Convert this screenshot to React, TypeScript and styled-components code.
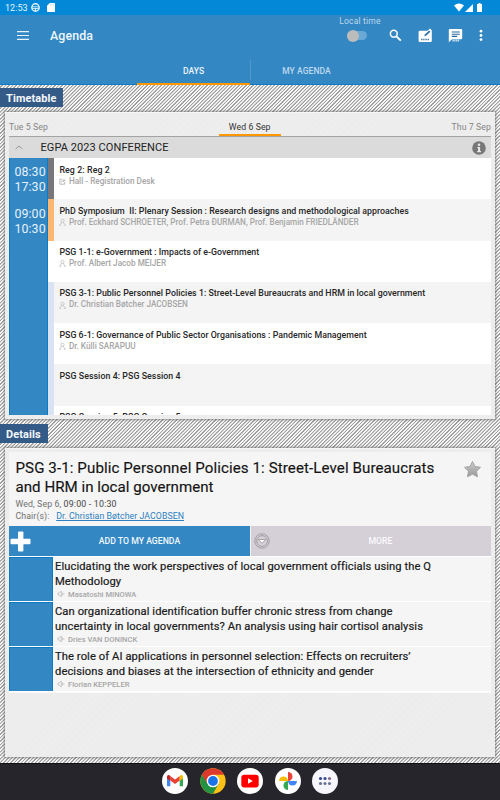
import React from "react";
import styled, { createGlobalStyle } from "styled-components";

const Global = createGlobalStyle`
  * { box-sizing: border-box; }
  body { margin: 0; font-family: Roboto, "Liberation Sans", sans-serif; background: #25252b; }
  svg { display: block; flex: none; }
`;

const Screen = styled.div`
  width: 500px; height: 800px; display: flex; flex-direction: column; overflow: hidden;
`;
const StatusBar = styled.div`
  height: 15px; background: #0288d6; color: #e3f3fc; display: flex; align-items: center;
  padding: 0 17px 0 5px; font-size: 9px; letter-spacing: 0.05px;
`;
const Clock = styled.span`width: 26px;`;
const StatusIcons = styled.div`display: flex; gap: 7px; align-items: center;`;
const SignalIcons = styled.div`display: flex; gap: 1px; align-items: center; margin-left: auto;`;

const AppBar = styled.header`
  height: 70px; background: #3387c3; border-bottom: 1px solid #0b7bc4; display: flex; flex-direction: column;
`;
const Toolbar = styled.div`height: 41px; display: flex; align-items: center; padding: 0 17px 0 17px;`;
const Title = styled.h1`
  margin: 0 0 0 21px; font-size: 12.4px; line-height: 14px; font-weight: 500; color: #eef6fb; letter-spacing: 0.1px; flex: 1;
`;
const LocalTime = styled.div`
  display: flex; flex-direction: column; align-items: center; width: 42px; height: 41px; padding-top: 1px;
  font-size: 8.5px; line-height: 11px; color: #bcd8ec; letter-spacing: 0.2px; white-space: nowrap;
`;
const Track = styled.div`
  width: 20px; height: 9px; border-radius: 5px; background: #6aa8d5; margin: 4px 0 0 -6px; display: flex; align-items: center;
`;
const Knob = styled.div`width: 12px; height: 12px; border-radius: 50%; background: #bcbcbc; flex: none;`;
const Actions = styled.div`display: flex; align-items: center; margin-left: 8px; height: 40px;`;

const Tabs = styled.nav`height: 29px; display: flex; padding-left: 137px;`;
const Tab = styled.div<{ $active?: boolean }>`
  width: ${(p) => (p.$active ? 113 : 111)}px; height: 29px; padding-top: 10px; text-align: center; line-height: 10px;
  font-size: 8.5px; font-weight: 500; letter-spacing: 0.08px; color: ${(p) => (p.$active ? "#eef6fb" : "#bdd9ed")};
  border-bottom: ${(p) => (p.$active ? "2px solid #ff9800" : "none")};
`;
const TabDivider = styled.div`width: 1px; height: 20px; background: #5197cb; margin-top: 4px;`;

const Hatched = styled.main`
  height: 678px; padding-top: 3px;
  background: repeating-linear-gradient(135deg, #f7f7f7 0 1.05px, #a0a0a0 1.4px 2.15px, #f7f7f7 2.5px);
`;
const SectionLabel = styled.h2<{ $w: number }>`
  margin: 0; width: ${(p) => p.$w}px; height: 19px; padding-left: 6px; line-height: 21px;
  background: #345a87; color: #f6f8fb; font-size: 10.9px; font-weight: 700; letter-spacing: 0.14px;
`;
const Panel = styled.section<{ $h: number; $tail: number }>`
  margin: 5px 5px ${(p) => p.$tail}px; height: ${(p) => p.$h}px; padding: 3px 4px 4px;
  background: repeating-linear-gradient(135deg, #efefef 0 1.25px, #ebebeb 1.25px 2.5px);
  border-top: 1px solid #f6f6f6; box-shadow: 0 0 2px 1px rgba(90, 90, 90, 0.55);
`;

const DayBar = styled.div`
  height: 21px; display: flex; justify-content: space-between; border-bottom: 1px solid #a3a3a3;
`;
const Day = styled.div<{ $active?: boolean }>`
  height: ${(p) => (p.$active ? 20 : 19)}px; font-size: 8.7px; line-height: 22.5px; letter-spacing: 0.1px;
  color: ${(p) => (p.$active ? "#333" : "#858585")}; text-align: center;
  ${(p) => p.$active && "width: 62px; border-bottom: 2px solid #ff9800;"}
`;
const GroupHeader = styled.div`
  height: 21px; background: #dbdbdb; display: flex; align-items: center; padding: 0 5px 0 6px;
`;
const GroupTitle = styled.div`flex: 1; margin-left: 17.5px; font-size: 11px; color: #222; letter-spacing: 0.08px;`;
const Schedule = styled.div`height: 257px; display: flex; overflow: hidden;`;
const Times = styled.div`width: 39px; background: #3387c3; border-right: 1px solid #0b7bc4; border-left: 1px solid #0b7bc4;`;
const Time = styled.div`
  height: 41.3px; padding: 6.4px 0 0 4.4px; color: #e6f1f9; font-size: 12.4px; line-height: 15px; letter-spacing: 0.1px;
`;
const Sessions = styled.div`flex: 1;`;
const Session = styled.div<{ $stripe: string; $alt: boolean }>`
  height: 41.3px; border-left: 6px solid ${(p) => p.$stripe}; background: ${(p) => (p.$alt ? "#f4f4f4" : "#fff")};
  padding: 6.6px 0 0 5.4px;
`;
const SessionTitle = styled.div<{ $ls: number }>`
  font-size: 8.8px; line-height: 11px; font-weight: 500; color: #262626; white-space: pre; letter-spacing: ${(p) => p.$ls}px;
`;
const Meta = styled.div<{ $ls: number }>`
  display: flex; align-items: center; gap: 1.5px; font-size: 8.2px; line-height: 11.5px; font-weight: 500; color: #a6a6a6; white-space: nowrap;
  letter-spacing: ${(p) => p.$ls}px;
`;

const DetailBody = styled.div`background: #f5f5f5; border-bottom: 1px solid #fafafa;`;
const DetailHead = styled.div`height: 74px; padding: 7px 9px 0 6.5px; display: flex; justify-content: space-between;`;
const DetailTitle = styled.div`font-size: 15.1px; line-height: 19.4px; color: #141414; white-space: nowrap; -webkit-text-stroke: 0.15px #141414;`;
const TitleLine = styled.div<{ $ls: number }>`letter-spacing: ${(p) => p.$ls}px;`;
const Info = styled.div`font-size: 8.8px; line-height: 12px; color: #707070; letter-spacing: 0.08px; white-space: pre;`;
const Strong = styled.span`color: #444; letter-spacing: 0.2px;`;
const PersonLink = styled.a`color: #2c7fc0; text-decoration: underline; margin-left: 4.5px; letter-spacing: 0.04px;`;
const Buttons = styled.div`display: grid; grid-template-columns: 241px 240px; gap: 1px; height: 31px; border-bottom: 1px solid #fff;`;
const Button = styled.div<{ $bg: string; $fg: string; $pad: number }>`
  height: 30px; background: ${(p) => p.$bg}; color: ${(p) => p.$fg}; display: flex; align-items: center;
  padding-left: ${(p) => p.$pad}px; font-size: 8.7px; font-weight: 500;
`;
const ButtonLabel = styled.span<{ $shift: number }>`flex: 1; text-align: center; margin-left: ${(p) => p.$shift}px;`;
const Paper = styled.article`height: 45px; display: flex; border-bottom: 1px solid #fff;`;
const Thumb = styled.div`width: 44px; background: #3387c3; border: 1px solid #0b7bc4; border-width: 1px 1px 0;`;
const PaperText = styled.div`padding: 2px 0 0 2px; font-size: 11.2px; line-height: 15px; color: #1a1a1a; white-space: nowrap;`;
const PaperLine = styled.div<{ $ls: number }>`letter-spacing: ${(p) => p.$ls}px; -webkit-text-stroke: 0.2px #1a1a1a;`;
const Speaker = styled.div`
  display: flex; align-items: center; gap: 3px; padding-left: 2px; margin-top: -0.5px;
  font-size: 7.6px; line-height: 11px; color: #a6a6a6; font-weight: 500;
`;
const Dock = styled.footer`
  height: 37px; background: #25252b; border-top: 1px solid #111; display: flex; justify-content: center; gap: 11.5px; padding-top: 4px;
`;

const Person = () => (
  <svg width="8" height="9" viewBox="0 0 8 9" fill="none" stroke="#b9b9b9" strokeWidth=".7">
    <circle cx="3.5" cy="2.8" r="1.6" /><path d="M.6 7.4Q1 5.4 2.7 5.1V4.2M6.4 7.4Q6 5.4 4.3 5.1V4.2M.6 7.3h1.6M4.8 7.3h1.6" />
  </svg>
);
const Place = () => (
  <svg width="8" height="9" viewBox="0 0 8 9" fill="none" stroke="#aaa" strokeWidth=".8">
    <path d="M3 2.3H.9v4.9h4.8V5M2.4 5.3Q2.6 3.4 5.6 3.3M4.3 1.7l1.6 1.6-1.6 1.6" />
  </svg>
);
const Horn = () => (
  <svg width="8" height="8" viewBox="0 0 8 8" fill="none" stroke="#b3b3b3" strokeWidth=".7">
    <path d="M1 3h1.3L4.3 1v6L2.3 5H1zM5.5 2.6v2.8M6.8 3.3v1.4" />
  </svg>
);

const LAVENDER = "#d9e3f4";
const sessions = [
  { title: "Reg 2: Reg 2", ls: 0.1, meta: "Hall - Registration Desk", mls: 0, place: true, stripe: "#77777c" },
  { title: "PhD Symposium  II: Plenary Session : Research designs and methodological approaches", ls: 0.03, meta: "Prof. Eckhard SCHROETER, Prof. Petra ĐURMAN, Prof. Benjamin FRIEDLÄNDER", mls: -0.01, stripe: "#fcb775" },
  { title: "PSG 1-1: e-Government : Impacts of e-Government", ls: 0.01, meta: "Prof. Albert Jacob MEIJER", mls: 0, stripe: "#fff" },
  { title: "PSG 3-1: Public Personnel Policies 1: Street-Level Bureaucrats and HRM in local government", ls: 0.03, meta: "Dr. Christian Bøtcher JACOBSEN", mls: 0, stripe: LAVENDER },
  { title: "PSG 6-1: Governance of Public Sector Organisations : Pandemic Management", ls: 0.025, meta: "Dr. Külli SARAPUU", mls: 0, stripe: LAVENDER },
  { title: "PSG Session 4: PSG Session 4", ls: 0.06, meta: "", mls: 0, stripe: LAVENDER },
  { title: "PSG Session 5: PSG Session 5", ls: 0.06, meta: "", mls: 0, stripe: LAVENDER },
];
const papers = [
  { lines: ["Elucidating the work perspectives of local government officials using the Q", "Methodology"], by: "Masatoshi MINOWA" },
  { lines: ["Can organizational identification buffer chronic stress from change", "uncertainty in local governments? An analysis using hair cortisol analysis"], by: "Dries VAN DONINCK" },
  { lines: ["The role of AI applications in personnel selection: Effects on recruiters’", "decisions and biases at the intersection of ethnicity and gender"], by: "Florian KEPPELER" },
];

const Spaced = styled.svg<{ $gap: number }>`margin-left: ${(p) => p.$gap}px;`;

const ToolbarIcons = () => (
  <Actions>
    <svg width="13" height="13" viewBox="0 0 13 13" fill="none" stroke="#fff"><circle cx="4.8" cy="4.7" r="3.4" strokeWidth="1.5" /><path d="M7.4 7.3l4.4 4.4" strokeWidth="1.9" /></svg>
    <Spaced $gap={16} width="15" height="15" viewBox="0 0 15 15">
      <rect x=".6" y="2.7" width="13.2" height="11.3" rx="1.3" fill="#fff" />
      <path d="M5.3 8.8l.8-2.8 5.9-5.4 2 2-6 5.7z" fill="#fff" />
      <path d="M6.3 8.2l.5-1.8 4.3-4 1.3 1.3-4.3 4z" fill="#2f75ae" />
      <path d="M3 11.5h8.500" stroke="#4e81ad" strokeWidth="1.3" strokeDasharray="1.2 .5" />
    </Spaced>
    <Spaced $gap={15} width="15" height="15" viewBox="0 0 15 15">
      <path d="M1.8 1h11.4q1 0 1 1v8.3q0 1-1 1H4l-3.2 3V2q0-1 1-1z" fill="#fff" />
      <path d="M3.8 4h8M3.8 6.2h8M3.8 8.4h5.4" stroke="#2a69a0" strokeWidth="1.1" />
      <path d="M4.4 12.5h7.2" stroke="#c8def0" strokeWidth="1.8" strokeDasharray="1.4 .4" />
    </Spaced>
    <Spaced $gap={16} width="4" height="13" viewBox="0 0 4 13" fill="#fff"><circle cx="2" cy="2.2" r="1.4" /><circle cx="2" cy="6.4" r="1.4" /><circle cx="2" cy="10.6" r="1.4" /></Spaced>
  </Actions>
);

const DockIcons = () => (
  <>
    <svg width="26" height="26" viewBox="0 0 26 26"><circle cx="13" cy="13" r="13" fill="#fff" />
      <path d="M5 8.5v9.8h3.3V10z" fill="#4285f4" /><path d="M17.7 10v8.3H21V8.5z" fill="#34a853" />
      <path d="M8.3 8v4.5L13 16l4.7-3.5V8L13 11.6z" fill="#ea4335" /><path d="M5 8.2v2.2l3.3 2.3V8Q6.2 5.8 5 8.2z" fill="#c5221f" /><path d="M21 8.2v2.2l-3.3 2.3V8q2.1-2.2 3.3.2z" fill="#fbbc04" /></svg>
    <svg width="26" height="26" viewBox="0 0 26 26">
      <circle cx="13" cy="13" r="12.7" fill="#fbc116" />
      <path d="M13 13L2 6.7A12.7 12.7 0 0 0 13 25.7L18.5 16z" fill="#229342" />
      <path d="M2 6.7A12.7 12.7 0 0 1 24 6.7H13L7.5 16z" fill="#dc3a2d" /><circle cx="13" cy="13" r="6.3" fill="#fff" /><circle cx="13" cy="13" r="4.9" fill="#1a73e8" /></svg>
    <svg width="26" height="26" viewBox="0 0 26 26"><circle cx="13" cy="13" r="13" fill="#fff" /><rect x="4.3" y="6.8" width="17.4" height="12.6" rx="3" fill="#f00" /><path d="M11 10.3v5.4l4.8-2.7z" fill="#fff" /></svg>
    <svg width="26" height="26" viewBox="0 0 26 26"><circle cx="13" cy="13" r="13" fill="#fff" />
      <path d="M13 13V4a4.5 4.5 0 0 1 0 9z" fill="#ea4335" /><path d="M13 13h9a4.5 4.5 0 0 1-9 0z" fill="#4285f4" /><path d="M13 13v9a4.5 4.5 0 0 1 0-9z" fill="#34a853" /><path d="M13 13H4a4.5 4.5 0 0 1 9 0z" fill="#fbbc04" /></svg>
    <svg width="26" height="26" viewBox="0 0 26 26"><circle cx="13" cy="13" r="13" fill="#f7f6fd" />
      <g fill="#32488a"><circle cx="8.5" cy="10.5" r="1.55" /><circle cx="13" cy="10.5" r="1.55" /></g><circle cx="17.5" cy="10.5" r="1.55" fill="#896887" />
      <g fill="#6a7591"><circle cx="8.5" cy="15.5" r="1.55" /><circle cx="13" cy="15.5" r="1.55" /><circle cx="17.5" cy="15.5" r="1.55" /></g></svg>
  </>
);

export default function App() {
  return (
    <Screen>
      <Global />
      <StatusBar>
        <Clock>12:53</Clock>
        <StatusIcons>
          <svg width="9" height="9" viewBox="0 0 9 9" fill="none" stroke="#e3f3fc"><circle cx="4.5" cy="4.5" r="3.7" strokeWidth="1.4" /><path d="M1 3.8h7M1 5.6h7M4.5 5v3" strokeWidth=".9" /></svg>
          <svg width="8" height="9" viewBox="0 0 8 9"><path d="M2.8 0H7.2q.8 0 .8.8v7.4q0 .8-.8.8H.8Q0 9 0 8.2V2.8z" fill="#fff" /><path d="M3.3 1v1.3M5 1v1.3M6.5 1v1.3" stroke="#8dc6ea" strokeWidth=".6" /></svg>
        </StatusIcons>
        <SignalIcons>
          <svg width="10" height="9" viewBox="0 0 10 9" fill="#fff"><path d="M0 2.5Q5-1.5 10 2.5L5 8.5z" /></svg>
          <svg width="8" height="8" viewBox="0 0 8 8" fill="#fff"><path d="M8 0v8H0z" /></svg>
          <Spaced $gap={2} width="7" height="9" viewBox="1 0 7 9" fill="#fff"><path d="M3.5 0h2v1H7v8H2V1h1.5z" /></Spaced>
        </SignalIcons>
      </StatusBar>
      <AppBar>
        <Toolbar>
          <svg width="12" height="10" viewBox="0 0 12 10" stroke="#e8f2f9" strokeWidth="1.2"><path d="M0 .6h12M0 4.5h12M0 8.4h12" /></svg>
          <Title>Agenda</Title>
          <LocalTime>Local time<Track><Knob /></Track></LocalTime>
          <ToolbarIcons />
        </Toolbar>
        <Tabs><Tab $active>DAYS</Tab><TabDivider /><Tab>MY AGENDA</Tab></Tabs>
      </AppBar>
      <Hatched>
        <SectionLabel $w={63}>Timetable</SectionLabel>
        <Panel $h={307} $tail={5}>
          <DayBar><Day>Tue 5 Sep</Day><Day $active>Wed 6 Sep</Day><Day>Thu 7 Sep</Day></DayBar>
          <GroupHeader>
            <svg width="8" height="5" viewBox="0 0 8 5" fill="none" stroke="#888" strokeWidth=".8"><path d="M.6 4L4 1l3.4 3" /></svg>
            <GroupTitle>EGPA 2023 CONFERENCE</GroupTitle>
            <svg width="14" height="14" viewBox="0 0 14 14"><circle cx="7" cy="7" r="6.8" fill="#777" /><circle cx="7" cy="3.7" r="1.3" fill="#e8e8e8" /><path d="M5.2 5.9h2.9v4.2h.9v1.2H5.2v-1.2h.8V7h-.8z" fill="#e8e8e8" /></svg>
          </GroupHeader>
          <Schedule>
            <Times><Time>08:30<br />17:30</Time><Time>09:00<br />10:30</Time></Times>
            <Sessions>
              {sessions.map((s, i) => (
                <Session key={s.title} $stripe={s.stripe} $alt={i % 2 === 1}>
                  <SessionTitle $ls={s.ls}>{s.title}</SessionTitle>
                  {s.meta && <Meta $ls={s.mls}>{s.place ? <Place /> : <Person />}{s.meta}</Meta>}
                </Session>
              ))}
            </Sessions>
          </Schedule>
        </Panel>
        <SectionLabel $w={48}>Details</SectionLabel>
        <Panel $h={309} $tail={0}>
          <DetailBody>
            <DetailHead>
              <div>
                <DetailTitle>
                  <TitleLine $ls={0.09}>PSG 3-1: Public Personnel Policies 1: Street-Level Bureaucrats</TitleLine>
                  <TitleLine $ls={0.02}>and HRM in local government</TitleLine>
                </DetailTitle>
                <Info>Wed, Sep 6, <Strong>09:00 - 10:30</Strong></Info>
                <Info>Chair(s): <PersonLink>Dr. Christian Bøtcher JACOBSEN</PersonLink></Info>
              </div>
              <svg width="19" height="19" viewBox="0 0 19 19">
                <defs><linearGradient id="star" x2="0" y2="1"><stop stopColor="#ccc" /><stop offset="1" stopColor="#999" /></linearGradient></defs>
                <path d="M9.5 2.5l2.5 5 5.500.8-4 3.900 1 5.600-5-2.600-5 2.600 1-5.600-4-3.900 5.500-.8z" fill="url(#star)" stroke="#a5a5a5" strokeLinejoin="round" />
              </svg>
            </DetailHead>
            <Buttons>
              <Button $bg="#3387c3" $fg="#f2f8fc" $pad={1}>
                <svg width="21" height="21" viewBox="0 0 21 21" fill="#fff"><rect x="8" y=".5" width="5.4" height="20" rx="1" /><rect x=".5" y="7.8" width="20" height="5.4" rx="1" /></svg>
                <ButtonLabel $shift={-2}>ADD TO MY AGENDA</ButtonLabel>
              </Button>
              <Button $bg="#d5cfd8" $fg="#fbfafc" $pad={3}>
                <svg width="16" height="16" viewBox="0 0 16 16" fill="none" stroke="#888"><circle cx="8" cy="8" r="7.2" strokeWidth=".7" /><circle cx="8" cy="8" r="5.4" strokeWidth=".7" /><path d="M4.2 6.5h7.6L8 10.2z" fill="#fff" strokeWidth=".7" /></svg>
                <ButtonLabel $shift={0}>MORE</ButtonLabel>
              </Button>
            </Buttons>
            {papers.map((p) => (
              <Paper key={p.by}>
                <Thumb />
                <PaperText>
                  {p.lines.map((l) => <PaperLine key={l} $ls={0.08}>{l}</PaperLine>)}
                  <Speaker><Horn />{p.by}</Speaker>
                </PaperText>
              </Paper>
            ))}
          </DetailBody>
        </Panel>
      </Hatched>
      <Dock><DockIcons /></Dock>
    </Screen>
  );
}
